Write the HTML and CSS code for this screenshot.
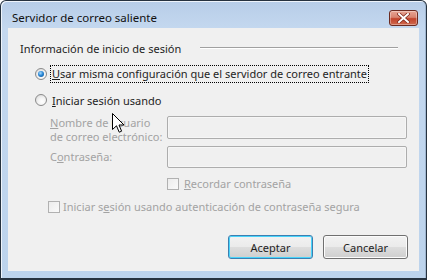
FILE: index.html
```html
<!DOCTYPE html>
<html lang="es">
    <head>
        <meta charset="UTF-8" />
        <meta name="viewport" content="width=device-width, initial-scale=1.0" />
        <title>Servidor de correo saliente</title>
        <link rel="stylesheet" href="styles.css">
    </head>
    <body>
        <div class="window">
            <div class="titlebar">
                <span class="title">Servidor de correo saliente</span>
                <button class="close" aria-label="Cerrar">
                    <svg width="13" height="10" viewBox="0 0 13 10">
                        <path d="M2 1 L11 9 M11 1 L2 9" stroke="#7a2418" stroke-width="3.4" stroke-linecap="square" />
                        <path d="M2 1 L11 9 M11 1 L2 9" stroke="#ffffff" stroke-width="2" stroke-linecap="square" />
                    </svg>
                </button>
            </div>
            <div class="client">
                <div class="group-title">
                    <span>Información de inicio de sesión</span>
                    <span class="rule"></span>
                </div>

                <div class="option">
                    <span class="radio checked"></span>
                    <span class="focus"><u>U</u>sar misma configuración que el servidor de correo entrante</span>
                </div>
                <div class="option">
                    <span class="radio"></span>
                    <span class="label"><u>I</u>niciar sesión usando</span>
                </div>

                <div class="fields">
                    <label class="disabled"><u>N</u>ombre de usuario<br>de correo electrónico:</label>
                    <div class="textbox"></div>
                    <label class="disabled single">C<u>o</u>ntraseña:</label>
                    <div class="textbox short"></div>
                    <div class="check-row">
                        <span class="checkbox"></span>
                        <span class="disabled"><u>R</u>ecordar contraseña</span>
                    </div>
                </div>

                <div class="check-row secure">
                    <span class="checkbox"></span>
                    <span class="disabled">Iniciar s<u>e</u>sión usando autenticación de contraseña segura</span>
                </div>

                <div class="buttons">
                    <button class="btn default">Aceptar</button>
                    <button class="btn">Cancelar</button>
                </div>

                <svg class="cursor" width="13" height="21" viewBox="0 0 13 21">
                    <path d="M0.5 0.5 L0.5 16.5 L4.5 12.8 L7.2 19.2 L9.6 18.2 L7 12 L12 12 Z" fill="#ffffff" stroke="#000000" stroke-width="1" stroke-linejoin="miter" />
                </svg>
            </div>
        </div>
    </body>
</html>
```

FILE: styles.css
```css
body {
    margin: 0;
    width: 427px;
    height: 280px;
    overflow: hidden;
    background: #ffffff;
    font-family: "Noto Sans", "Open Sans", sans-serif;
    font-size: 11px;
    color: #1e1e1e;
}

.window {
    box-sizing: border-box;
    width: 427px;
    height: 280px;
    border: 1px solid #26323f;
    border-bottom-width: 2px;
    border-radius: 6px 6px 0 0;
    background: linear-gradient(#b7cde8 0px, #c4d8ef 28px, #bcd3ec 100%);
    box-shadow: inset 1px 1px 0 #eef4fb, inset -1px 0 0 #9fb6d0;
    padding: 0 7px 7px 7px;
    display: flex;
    flex-direction: column;
}

.titlebar {
    height: 27px;
    display: flex;
    align-items: flex-start;
    justify-content: space-between;
}

.title {
    margin: 9px 0 0 4px;
    color: #111111;
    font-size: 11.5px;
}

.close {
    width: 29px;
    height: 16px;
    margin: 9px 1px 0 0;
    padding: 0;
    border: 1px solid #6b2a20;
    border-radius: 3px;
    background: linear-gradient(#e8a493 0%, #d98470 45%, #c2432b 55%, #cf6a4f 100%);
    box-shadow: inset 0 0 0 1px rgba(255, 255, 255, 0.35);
    display: flex;
    align-items: center;
    justify-content: center;
}

.client {
    position: relative;
    flex: 1;
    background: #f0f0f0;
    padding: 12px 11px 12px 12px;
    display: flex;
    flex-direction: column;
}

.group-title {
    display: flex;
    align-items: center;
    gap: 19px;
    height: 16px;
    color: #1e1e1e;
}

.rule {
    flex: 1;
    height: 1px;
    margin-right: 10px;
    background: #a0a0a0;
    border-bottom: 1px solid #ffffff;
}

.option {
    display: flex;
    align-items: center;
    height: 18px;
    margin-left: 15px;
    gap: 4px;
}

.group-title + .option {
    margin-top: 9px;
}

.option + .option {
    margin-top: 8px;
}

.radio {
    box-sizing: border-box;
    width: 12px;
    height: 12px;
    border-radius: 50%;
    border: 1px solid #8a8a8a;
    background: radial-gradient(circle at 60% 65%, #ffffff 0, #f4f4f4 40%, #d3d3d3 100%);
    display: flex;
    align-items: center;
    justify-content: center;
}

.radio.checked::after {
    content: "";
    width: 6px;
    height: 6px;
    border-radius: 50%;
    background: radial-gradient(circle at 40% 35%, #a9dcff 0, #2b88d6 45%, #0b4c8a 100%);
}

.focus {
    outline: 1px dotted #000000;
    padding: 0 1px;
    line-height: 16px;
    color: #1e1e1e;
}

.label {
    padding: 0 1px;
}

.fields {
    display: grid;
    grid-template-columns: 117px 240px;
    margin-left: 30px;
    margin-top: 7px;
    row-gap: 2px;
    align-items: start;
}

.disabled {
    color: #a3a3a3;
}

label.disabled {
    line-height: 14px;
    white-space: nowrap;
}

label.single {
    line-height: 22px;
}

.textbox {
    box-sizing: border-box;
    height: 23px;
    border: 1px solid #adadad;
    border-radius: 2px;
    background: #f0f0f0;
    box-shadow: inset 0 0 0 1px #f6f6f6;
}

.textbox.short {
    height: 22px;
}

.check-row {
    grid-column: 2;
    display: flex;
    align-items: center;
    gap: 5px;
    height: 13px;
    margin-top: 7px;
}

.checkbox {
    box-sizing: border-box;
    width: 12px;
    height: 12px;
    border: 1px solid #b1b1b1;
    background: linear-gradient(135deg, #ececec, #fafafa);
}

.secure {
    margin-left: 28px;
    margin-top: 10px;
    gap: 3px;
}

.buttons {
    margin-top: auto;
    display: flex;
    justify-content: flex-end;
    gap: 10px;
}

.btn {
    box-sizing: border-box;
    width: 85px;
    height: 24px;
    padding: 0;
    border: 1px solid #707070;
    border-radius: 3px;
    background: linear-gradient(#f2f2f2 0%, #ebebeb 48%, #dddddd 52%, #cfcfcf 100%);
    box-shadow: inset 0 0 0 1px #fcfcfc;
    font-family: inherit;
    font-size: 11px;
    color: #1e1e1e;
}

.btn.default {
    border-color: #3c7fb1;
    box-shadow: inset 0 0 0 1px #48d4fb;
}

.cursor {
    position: absolute;
    left: 104px;
    top: 85px;
}
```
